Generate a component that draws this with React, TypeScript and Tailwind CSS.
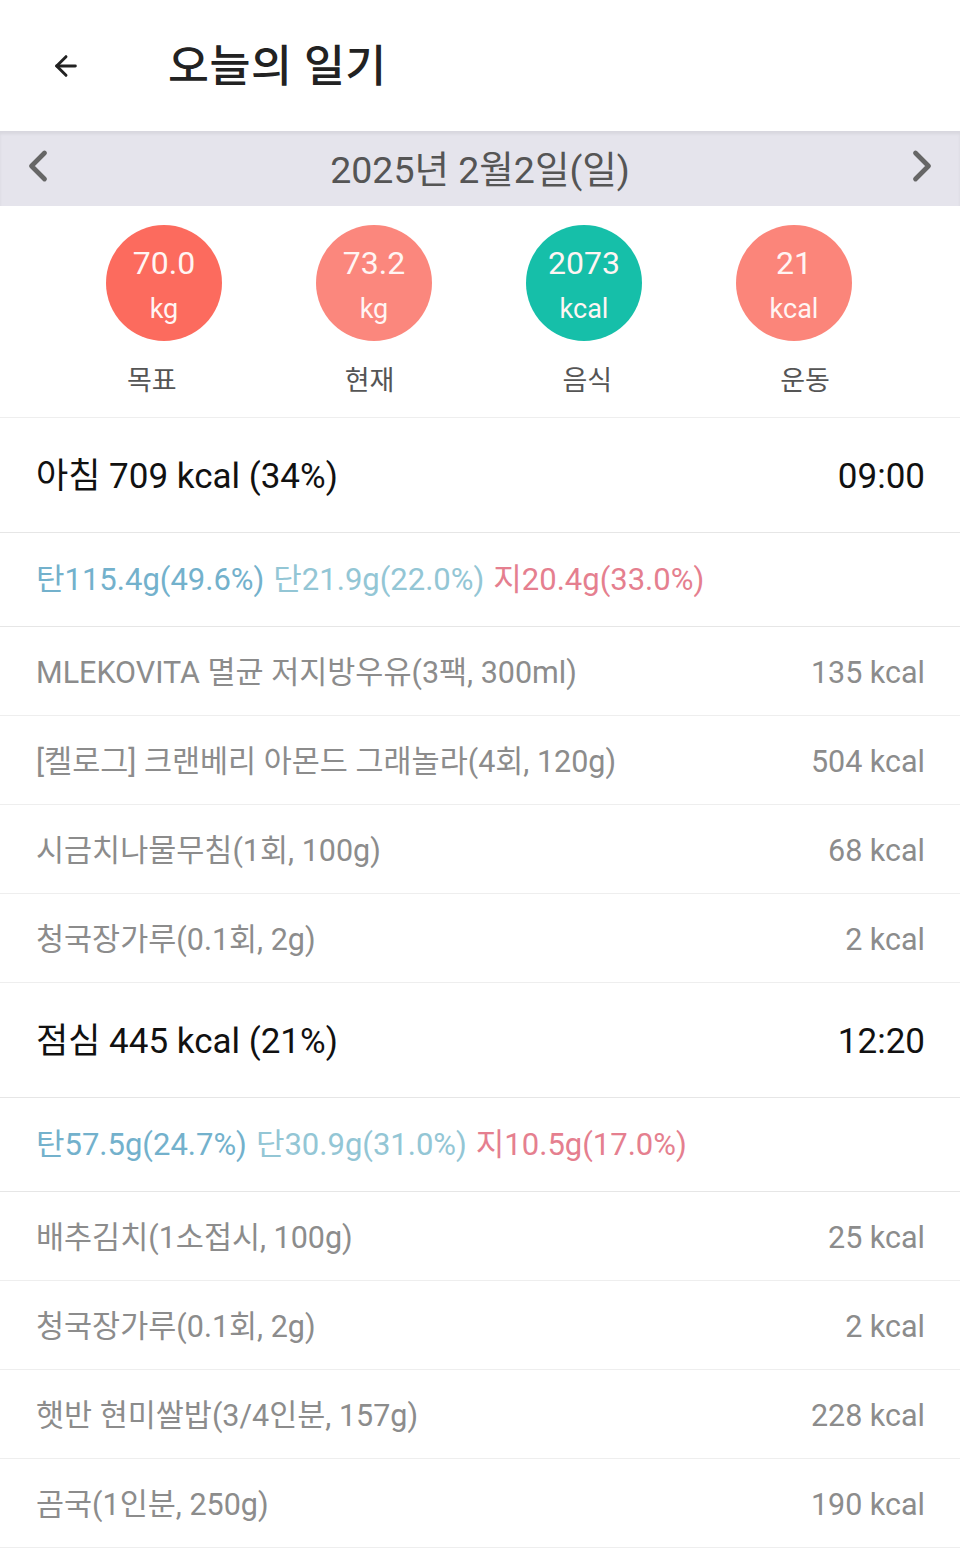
import { ArrowLeft, ChevronLeft, ChevronRight } from "lucide-react";

const font = { fontFamily: "Roboto, 'Noto Sans CJK KR', sans-serif" };

const stats = [
  { value: "70.0", unit: "kg", label: "목표", color: "bg-[#fc6b5e]" },
  { value: "73.2", unit: "kg", label: "현재", color: "bg-[#fb877d]" },
  { value: "2073", unit: "kcal", label: "음식", color: "bg-[#16bfa9]" },
  { value: "21", unit: "kcal", label: "운동", color: "bg-[#fb857a]" },
];

const meals = [
  {
    title: "아침 709 kcal (34%)",
    time: "09:00",
    carb: "탄115.4g(49.6%)",
    protein: "단21.9g(22.0%)",
    fat: "지20.4g(33.0%)",
    foods: [
      { name: "MLEKOVITA 멸균 저지방우유(3팩, 300ml)", kcal: "135 kcal" },
      { name: "[켈로그] 크랜베리 아몬드 그래놀라(4회, 120g)", kcal: "504 kcal" },
      { name: "시금치나물무침(1회, 100g)", kcal: "68 kcal" },
      { name: "청국장가루(0.1회, 2g)", kcal: "2 kcal" },
    ],
  },
  {
    title: "점심 445 kcal (21%)",
    time: "12:20",
    carb: "탄57.5g(24.7%)",
    protein: "단30.9g(31.0%)",
    fat: "지10.5g(17.0%)",
    foods: [
      { name: "배추김치(1소접시, 100g)", kcal: "25 kcal" },
      { name: "청국장가루(0.1회, 2g)", kcal: "2 kcal" },
      { name: "햇반 현미쌀밥(3/4인분, 157g)", kcal: "228 kcal" },
      { name: "곰국(1인분, 250g)", kcal: "190 kcal" },
    ],
  },
];

export default function App() {
  return (
    <div className="w-[960px] min-h-[1549px] bg-white" style={font}>
      <header className="h-[131px] flex items-center bg-white">
        <ArrowLeft className="ml-[50px] w-[32px] h-[32px] text-[#222]" strokeWidth={2.2} />
        <h1 className="ml-[86px] mt-[4px] text-[44.5px] text-[#222] font-medium tracking-[0.5px]">오늘의 일기</h1>
      </header>

      <div className="h-[75px] bg-[#e5e4ec] flex items-center justify-between px-[12px] shadow-[inset_0_3px_3px_rgba(0,0,0,0.06)]">
        <ChevronLeft className="w-[52px] h-[52px] text-[#666] -mt-[6px]" strokeWidth={2.2} />
        <span className="text-[37.5px] text-[#555] mt-[4px]">2025년 2월2일(일)</span>
        <ChevronRight className="w-[52px] h-[52px] text-[#666] -mt-[6px]" strokeWidth={2.2} />
      </div>

      <section className="h-[212px] border-b border-[#eeeeee]">
        <div className="grid grid-cols-4 w-[840px] ml-[59px] pt-[19px]">
          {stats.map((s) => (
            <div key={s.label} className="flex justify-center">
              <div className={`w-[116px] h-[116px] rounded-full ${s.color} flex flex-col items-center justify-center pt-[6px] text-[#fff5f3]`}>
                <span className="text-[32px] leading-[46px]">{s.value}</span>
                <span className="text-[27px] leading-[46px]">{s.unit}</span>
              </div>
            </div>
          ))}
        </div>
        <div className="grid grid-cols-4 w-[871px] ml-[43px] mt-[20px]">
          {stats.map((s) => (
            <div key={s.label} className="text-center text-[27px] text-[#555]">
              {s.label}
            </div>
          ))}
        </div>
      </section>

      {meals.map((m) => (
        <div key={m.title}>
          <div className="h-[115px] flex items-center justify-between pl-[36px] pr-[35px] pt-[4px] border-b border-[#e6e6e6]">
            <span className="text-[35px] text-[#111]">{m.title}</span>
            <span className="text-[35px] text-[#111]">{m.time}</span>
          </div>
          <div className="h-[94px] flex items-center px-[36px] pt-[2px] border-b border-[#e6e6e6] text-[31px] gap-[9px]">
            <span className="text-[#73b1cc]">{m.carb}</span>
            <span className="text-[#93c6d5]">{m.protein}</span>
            <span className="text-[#e57f8f]">{m.fat}</span>
          </div>
          {m.foods.map((f) => (
            <div
              key={f.name}
              className="h-[89px] flex items-center justify-between pl-[36px] pr-[35px] pt-[3px] border-b border-[#eeeeee] text-[30.5px] text-[#8c8c8c]"
            >
              <span>{f.name}</span>
              <span>{f.kcal}</span>
            </div>
          ))}
        </div>
      ))}
    </div>
  );
}
